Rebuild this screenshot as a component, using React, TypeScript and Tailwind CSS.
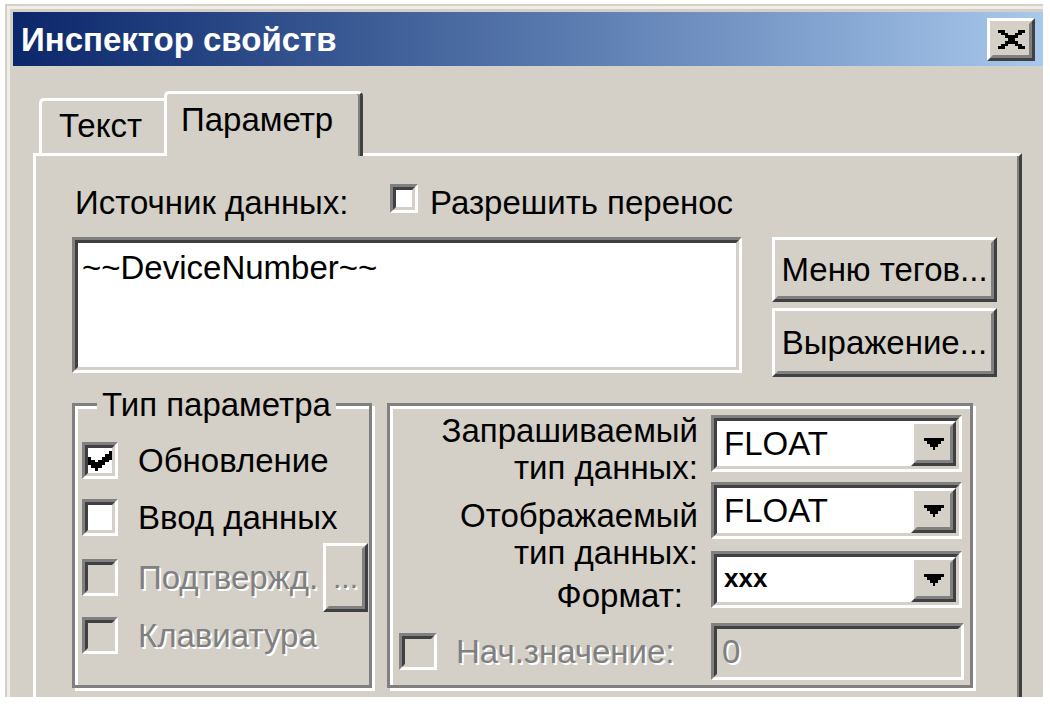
import React from "react";

type BoxProps = { className?: string; innerClassName?: string; children?: React.ReactNode };

function SunkenBox({ className = "", innerClassName = "", children }: BoxProps) {
  return (
    <div className={`border-[3px] border-t-[#808080] border-l-[#808080] border-r-white border-b-white ${className}`}>
      <div className={`h-full w-full border-[3px] border-t-[#404040] border-l-[#404040] border-r-[#d4d0c8] border-b-[#d4d0c8] ${innerClassName}`}>
        {children}
      </div>
    </div>
  );
}

function Raised({ className = "", innerClassName = "", children }: BoxProps) {
  return (
    <div className={`bg-[#d4d0c8] border-[3px] border-t-white border-l-white border-r-[#404040] border-b-[#404040] ${className}`}>
      <div className={`h-full w-full border-[3px] border-t-[#d4d0c8] border-l-[#d4d0c8] border-r-[#808080] border-b-[#808080] ${innerClassName}`}>
        {children}
      </div>
    </div>
  );
}

function CheckMark() {
  return (
    <svg className="block shrink-0" width="24" height="20" viewBox="0 0 7 7" preserveAspectRatio="none" shapeRendering="crispEdges">
      <g fill="#000">
        <rect x="6" y="0" width="1" height="1" />
        <rect x="5" y="1" width="2" height="1" />
        <rect x="0" y="2" width="1" height="1" />
        <rect x="4" y="2" width="3" height="1" />
        <rect x="0" y="3" width="2" height="1" />
        <rect x="3" y="3" width="3" height="1" />
        <rect x="0" y="4" width="5" height="1" />
        <rect x="1" y="5" width="3" height="1" />
        <rect x="2" y="6" width="1" height="1" />
      </g>
    </svg>
  );
}

function CloseX() {
  return (
    <svg className="block shrink-0" width="27" height="19" viewBox="0 0 8 7" preserveAspectRatio="none" shapeRendering="crispEdges">
      <g fill="#000">
        <rect x="0" y="0" width="2" height="1" />
        <rect x="6" y="0" width="2" height="1" />
        <rect x="1" y="1" width="2" height="1" />
        <rect x="5" y="1" width="2" height="1" />
        <rect x="2" y="2" width="4" height="1" />
        <rect x="3" y="3" width="2" height="1" />
        <rect x="2" y="4" width="4" height="1" />
        <rect x="1" y="5" width="2" height="1" />
        <rect x="5" y="5" width="2" height="1" />
        <rect x="0" y="6" width="2" height="1" />
        <rect x="6" y="6" width="2" height="1" />
      </g>
    </svg>
  );
}

function DownArrow() {
  return (
    <svg className="block shrink-0" width="20" height="12" viewBox="0 0 7 4" preserveAspectRatio="none" shapeRendering="crispEdges">
      <g fill="#000">
        <rect x="0" y="0" width="7" height="1" />
        <rect x="1" y="1" width="5" height="1" />
        <rect x="2" y="2" width="3" height="1" />
        <rect x="3" y="3" width="1" height="1" />
      </g>
    </svg>
  );
}

function CheckBox({ className = "", checked = false, disabled = false }: { className?: string; checked?: boolean; disabled?: boolean }) {
  return (
    <SunkenBox
      className={`shrink-0 ${className}`}
      innerClassName={`${disabled ? "bg-[#d4d0c8]" : "bg-white"} flex items-center justify-center`}
    >
      {checked ? <CheckMark /> : null}
    </SunkenBox>
  );
}

function Combo({ className = "", children }: { className?: string; children?: React.ReactNode }) {
  return (
    <SunkenBox className={`w-[251px] h-[57px] shrink-0 ${className}`} innerClassName="bg-white flex items-stretch">
      <div className="flex-1 flex items-center pl-[7px] whitespace-nowrap">{children}</div>
      <Raised className="w-[45px] h-full" innerClassName="flex items-center justify-center">
        <DownArrow />
      </Raised>
    </SunkenBox>
  );
}

const disabledText = "text-[#808080] [text-shadow:2px_2px_0_#ffffff]";
const groupBox =
  "h-[285px] border-[3px] border-[#808080] shadow-[inset_3px_3px_0_#ffffff,3px_3px_0_#ffffff] flex flex-col shrink-0";

export default function App() {
  return (
    <div className="w-[1050px] h-[706px] bg-white overflow-hidden pt-[4px] pl-[5px] font-['Liberation_Sans',Arial,sans-serif] text-black text-[33px] leading-[33px]">
      <div className="w-[1038px] h-[693px] bg-[#d4d0c8] pl-[8px] pt-[8px] overflow-hidden shadow-[inset_2px_2px_0_#d4d0c8,inset_5px_5px_0_#efede8]">
        {/* Title bar */}
        <div className="h-[54px] w-[1030px] bg-linear-to-r from-[#0c266a] to-[#a8c8ec] flex items-center justify-between pl-[8px] pr-[8px]">
          <span className="text-white font-bold whitespace-nowrap">Инспектор свойств</span>
          <Raised className="w-[48px] h-[43px]" innerClassName="flex items-center justify-center">
            <CloseX />
          </Raised>
        </div>

        {/* Tab control */}
        <div className="ml-[20px] mt-[25px] w-[989px]">
          <div className="flex items-end pl-[6px] h-[62px]">
            <div className="w-[125px] h-[55px] border-t-[3px] border-l-[3px] border-white rounded-tl-[5px] pl-[17px] pt-[8px] whitespace-nowrap">
              Текст
            </div>
            <div className="relative z-10 w-[199px] h-[65px] -mb-[3px] bg-[#d4d0c8] border-t-[3px] border-l-[3px] border-r-[3px] border-t-white border-l-white border-r-[#404040] rounded-t-[5px] shadow-[inset_-2px_0_0_#808080] pl-[14px] pt-[9px] whitespace-nowrap">
              Параметр
            </div>
          </div>

          <div className="h-[560px] border-t-[3px] border-l-[3px] border-r-[3px] border-t-white border-l-white border-r-[#404040] shadow-[inset_-2px_0_0_#808080] pl-[36px] pt-[28px]">
            {/* Row 1 */}
            <div className="flex items-start h-[29px]">
              <span className="ml-[3px] w-[315px] mt-[2px] whitespace-nowrap">Источник данных:</span>
              <CheckBox className="w-[28px] h-[29px]" />
              <span className="ml-[12px] mt-[2px] whitespace-nowrap">Разрешить перенос</span>
            </div>

            {/* Row 2 */}
            <div className="flex mt-[24px]">
              <SunkenBox className="w-[670px] h-[136px] shrink-0" innerClassName="bg-white pl-[4px] pt-[8px] whitespace-nowrap">
                ~~DeviceNumber~~
              </SunkenBox>
              <div className="ml-[30px] w-[225px] flex flex-col gap-[6px]">
                <Raised className="h-[65px]" innerClassName="flex items-center justify-center whitespace-nowrap">
                  Меню тегов...
                </Raised>
                <Raised className="h-[69px]" innerClassName="flex items-center justify-center whitespace-nowrap">
                  Выражение...
                </Raised>
              </div>
            </div>

            {/* Row 3: group boxes */}
            <div className="flex mt-[26px]">
              <div className={`w-[300px] pl-[7px] pr-[1px] ${groupBox}`}>
                <div className="-mt-[18px] ml-[15px] px-[5px] bg-[#d4d0c8] w-fit whitespace-nowrap">Тип параметра</div>
                <div className="flex items-center h-[37px] mt-[21px]">
                  <CheckBox className="w-[36px] h-[37px]" checked />
                  <span className="ml-[20px] whitespace-nowrap">Обновление</span>
                </div>
                <div className="flex items-center h-[37px] mt-[20px]">
                  <CheckBox className="w-[36px] h-[37px]" />
                  <span className="ml-[20px] whitespace-nowrap">Ввод данных</span>
                </div>
                <div className="flex items-center h-[69px] mt-[7px]">
                  <CheckBox className="w-[36px] h-[37px]" disabled />
                  <span className={`ml-[20px] whitespace-nowrap ${disabledText}`}>Подтвержд.</span>
                  <Raised className="ml-auto w-[45px] h-[69px] shrink-0" innerClassName={`flex items-center justify-center text-[30px] ${disabledText}`}>
                    ...
                  </Raised>
                </div>
                <div className="flex items-center h-[37px] mt-[5px]">
                  <CheckBox className="w-[36px] h-[37px]" disabled />
                  <span className={`ml-[20px] whitespace-nowrap ${disabledText}`}>Клавиатура</span>
                </div>
              </div>

              <div className={`ml-[15px] w-[586px] ${groupBox}`}>
                <div className="flex h-[57px] mt-[9px]">
                  <div className="w-[308px] -mt-[3px] text-right leading-[37px] whitespace-nowrap">
                    Запрашиваемый
                    <br />
                    тип данных:
                  </div>
                  <Combo className="ml-[13px]">FLOAT</Combo>
                </div>
                <div className="flex h-[57px] mt-[10px]">
                  <div className="w-[308px] mt-[15px] text-right leading-[37px] whitespace-nowrap">
                    Отображаемый
                    <br />
                    тип данных:
                  </div>
                  <Combo className="ml-[13px]">FLOAT</Combo>
                </div>
                <div className="flex h-[57px] mt-[12px]">
                  <div className="w-[308px] mt-[26px] pr-[15px] text-right leading-[37px] whitespace-nowrap">Формат:</div>
                  <Combo className="ml-[13px]">
                    <span className="font-bold text-[26px] leading-[26px] -mt-[4px]">xxx</span>
                  </Combo>
                </div>
                <div className="flex items-center h-[57px] mt-[15px]">
                  <div className="w-[308px] flex items-center">
                    <CheckBox className="ml-[9px] w-[38px] h-[37px]" disabled />
                    <span className={`ml-[19px] whitespace-nowrap ${disabledText}`}>Нач.значение:</span>
                  </div>
                  <SunkenBox className="ml-[13px] w-[253px] h-[57px] shrink-0" innerClassName={`bg-[#d4d0c8] flex items-center pl-[5px] ${disabledText}`}>
                    0
                  </SunkenBox>
                </div>
              </div>
            </div>
          </div>
        </div>
      </div>
    </div>
  );
}
